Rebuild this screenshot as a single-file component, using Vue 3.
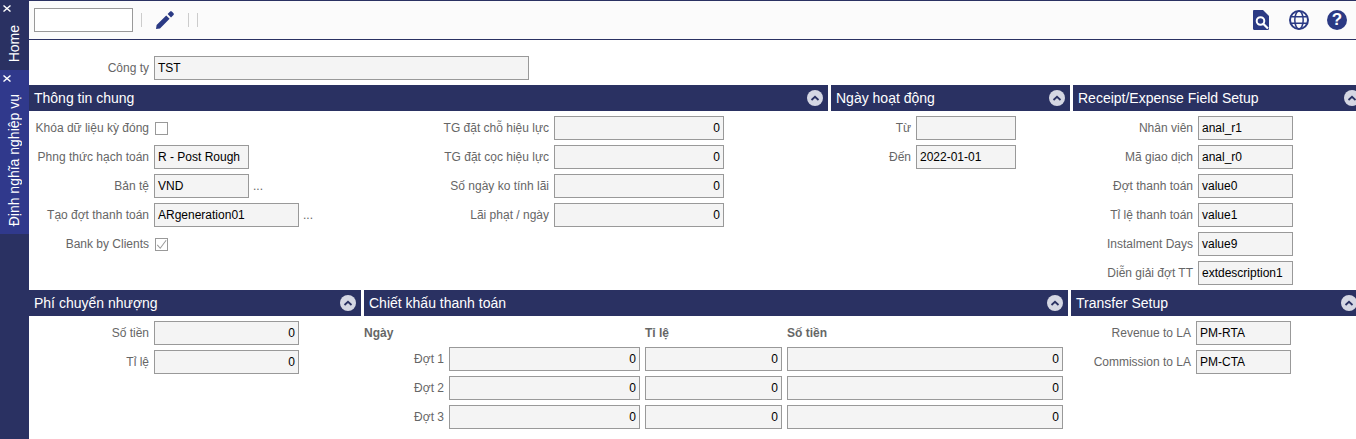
<script setup>
const general = [
  { label: 'Phng thức hạch toán', value: 'R - Post Rough', cls: 'w95' },
  { label: 'Bản tệ', value: 'VND', cls: 'w95', more: true },
  { label: 'Tạo đợt thanh toán', value: 'ARgeneration01', cls: 'w145', more: true },
]
const generalRight = ['TG đặt chỗ hiệu lực', 'TG đặt cọc hiệu lực', 'Số ngày ko tính lãi', 'Lãi phạt / ngày']
const receipt = [
  ['Nhân viên', 'anal_r1'],
  ['Mã giao dịch', 'anal_r0'],
  ['Đợt thanh toán', 'value0'],
  ['Tỉ lệ thanh toán', 'value1'],
  ['Instalment Days', 'value9'],
  ['Diễn giải đợt TT', 'extdescription1'],
]
const batches = ['Đợt 1', 'Đợt 2', 'Đợt 3']
const transfer = [['Revenue to LA', 'PM-RTA'], ['Commission to LA', 'PM-CTA']]
</script>

<template>
  <div class="app">
    <aside class="side">
      <div class="tab home">
        <svg class="x" viewBox="0 0 8 7" width="8" height="7"><path d="M0.5 0.5 L7.5 6.5 M7.5 0.5 L0.5 6.5" /></svg>
        <span class="vtext">Home</span>
      </div>
      <div class="tab active">
        <svg class="x" viewBox="0 0 8 7" width="8" height="7"><path d="M0.5 0.5 L7.5 6.5 M7.5 0.5 L0.5 6.5" /></svg>
        <span class="vtext">Định nghĩa nghiệp vụ</span>
      </div>
    </aside>

    <main class="main">
      <header class="toolbar">
        <div class="search"></div>
        <i class="sep first"></i>
        <svg class="pencil" viewBox="0 0 18 18" width="18" height="18">
          <path fill="#2b3a84" d="M0.6 14 L0 18 L4 17.4 L13.6 7.8 L10.2 4.4 Z M11.6 3 L15 6.4 L17.5 3.9 C18 3.4 18 2.7 17.5 2.2 L15.8 0.5 C15.3 0 14.6 0 14.1 0.5 Z" />
        </svg>
        <i class="sep second"></i>
        <i class="sep third"></i>
        <div class="tools">
          <svg width="16" height="20" viewBox="0 0 16 20">
            <path fill="#2b3a84" d="M1.2 0 H10 L16 6 V18.8 C16 19.5 15.5 20 14.8 20 H1.2 C.5 20 0 19.5 0 18.8 V1.2 C0 .5 .5 0 1.2 0 Z" />
            <circle cx="7.5" cy="11" r="3.8" fill="none" stroke="#fff" stroke-width="2" />
            <path d="M10.2 13.7 L15 18.5" stroke="#fff" stroke-width="2.2" />
          </svg>
          <svg class="globe" width="20" height="20" viewBox="0 0 20 20" fill="none" stroke="#2b3a84">
            <circle cx="10" cy="10" r="9" stroke-width="2" />
            <ellipse cx="10" cy="10" rx="4.2" ry="9" stroke-width="1.5" />
            <path d="M1 6.8 H19 M1 13.2 H19" stroke-width="1.5" />
          </svg>
          <span class="help">?</span>
        </div>
      </header>

      <div class="company">
        <label class="lbl w120">Công ty</label>
        <div class="field w375">TST</div>
      </div>

      <div class="row-top">
        <section class="panel p-general">
          <h2 class="head">Thông tin chung<b class="chev"><svg viewBox="0 0 16 16"><path d="M4.5 10 L8 6.8 L11.5 10" /></svg></b></h2>
          <div class="cols">
            <div class="col-left">
              <div class="line">
                <label class="lbl w120">Khóa dữ liệu kỳ đóng</label>
                <span class="check"></span>
              </div>
              <div v-for="r in general" :key="r.label" class="line">
                <label class="lbl w120">{{ r.label }}</label>
                <div class="field" :class="r.cls">{{ r.value }}</div>
                <span v-if="r.more" class="more">...</span>
              </div>
              <div class="line">
                <label class="lbl w120">Bank by Clients</label>
                <span class="check">
                  <svg viewBox="0 0 13 13" width="11" height="11"><path d="M1.5 7 L5 11 L12 1.5" fill="none" stroke="#999" stroke-width="1.2" /></svg>
                </span>
              </div>
            </div>
            <div class="col-right">
              <div v-for="r in generalRight" :key="r" class="line">
                <label class="lbl w120">{{ r }}</label>
                <div class="field num w170">0</div>
              </div>
            </div>
          </div>
        </section>

        <section class="panel p-dates">
          <h2 class="head">Ngày hoạt động<b class="chev"><svg viewBox="0 0 16 16"><path d="M4.5 10 L8 6.8 L11.5 10" /></svg></b></h2>
          <div class="body">
            <div class="line">
              <label class="lbl w80">Từ</label>
              <div class="field w100"></div>
            </div>
            <div class="line">
              <label class="lbl w80">Đến</label>
              <div class="field w100">2022-01-01</div>
            </div>
          </div>
        </section>

        <section class="panel p-receipt">
          <h2 class="head">Receipt/Expense Field Setup<b class="chev"><svg viewBox="0 0 16 16"><path d="M4.5 10 L8 6.8 L11.5 10" /></svg></b></h2>
          <div class="body">
            <div v-for="r in receipt" :key="r[0]" class="line">
              <label class="lbl w120">{{ r[0] }}</label>
              <div class="field w95">{{ r[1] }}</div>
            </div>
          </div>
        </section>
      </div>

      <div class="row-bottom">
        <section class="panel p-fee">
          <h2 class="head">Phí chuyển nhượng<b class="chev"><svg viewBox="0 0 16 16"><path d="M4.5 10 L8 6.8 L11.5 10" /></svg></b></h2>
          <div class="body">
            <div class="line">
              <label class="lbl w120">Số tiền</label>
              <div class="field num w145">0</div>
            </div>
            <div class="line">
              <label class="lbl w120">Tỉ lệ</label>
              <div class="field num w145">0</div>
            </div>
          </div>
        </section>

        <section class="panel p-discount">
          <h2 class="head">Chiết khấu thanh toán<b class="chev"><svg viewBox="0 0 16 16"><path d="M4.5 10 L8 6.8 L11.5 10" /></svg></b></h2>
          <div class="grid">
            <span class="th th-date">Ngày</span>
            <span class="th">Tỉ lệ</span>
            <span class="th">Số tiền</span>
            <template v-for="b in batches" :key="b">
              <label class="lbl batch">{{ b }}</label>
              <div class="field num">0</div>
              <div class="field num">0</div>
              <div class="field num">0</div>
            </template>
          </div>
        </section>

        <section class="panel p-transfer">
          <h2 class="head">Transfer Setup<b class="chev"><svg viewBox="0 0 16 16"><path d="M4.5 10 L8 6.8 L11.5 10" /></svg></b></h2>
          <div class="body">
            <div v-for="r in transfer" :key="r[0]" class="line">
              <label class="lbl w120">{{ r[0] }}</label>
              <div class="field w95">{{ r[1] }}</div>
            </div>
          </div>
        </section>
      </div>
    </main>
  </div>
</template>

<style scoped>
.app {
  display: flex;
  width: 1356px;
  height: 439px;
  overflow: hidden;
  background: #fff;
  font-family: "Liberation Sans", Arial, sans-serif;
  font-size: 12px;
}
.side {
  width: 29px;
  flex: none;
  background: #2a3162;
  color: #fff;
}
.tab {
  display: flex;
  flex-direction: column;
  overflow: hidden;
}
.home { height: 70px; }
.active { height: 164px; background: #30398c; }
.x {
  flex: none;
  margin: 5px 0 0 3px;
  fill: none;
  stroke: #fff;
  stroke-width: 1.4;
}
.vtext {
  writing-mode: vertical-rl;
  transform: rotate(180deg);
  font-size: 14px;
  line-height: 29px;
  margin-top: auto;
  margin-bottom: 8px;
  white-space: nowrap;
}
.main { flex: 1; min-width: 0; }
.toolbar {
  box-sizing: border-box;
  height: 40px;
  display: flex;
  align-items: center;
  padding-left: 5px;
  background: #fbfbfb;
  border-top: 1px solid #2a3162;
  border-bottom: 1px solid #2a3162;
}
.search {
  width: 99px;
  height: 24px;
  box-sizing: border-box;
  background: #fff;
  border: 1px solid #999;
}
.sep {
  width: 1px;
  height: 14px;
  background: #ccc;
}
.first { margin-left: 8px; }
.pencil { margin-left: 14px; }
.second { margin-left: 14px; }
.third { margin-left: 8px; }
.tools {
  margin-left: auto;
  display: flex;
  align-items: center;
  padding-right: 9px;
}
.globe { margin-left: 20px; }
.help {
  width: 20px;
  height: 20px;
  margin-left: 18px;
  border-radius: 50%;
  background: #2b3a84;
  color: #fff;
  text-align: center;
  font-size: 17px;
  line-height: 20px;
  font-weight: 700;
}
.company {
  display: flex;
  align-items: center;
  height: 24px;
  margin-top: 16px;
}
.row-top, .row-bottom {
  display: flex;
}
.row-top { margin-top: 5px; height: 205px; }
.panel { flex: none; }
.p-general { width: 799px; }
.p-dates { width: 239px; margin-left: 3px; }
.p-receipt { width: 292px; margin-left: 3px; }
.p-fee { width: 332px; }
.p-discount { width: 704px; margin-left: 3px; }
.p-transfer { width: 291px; margin-left: 3px; }
.head {
  position: relative;
  height: 26px;
  margin: 0;
  padding-left: 5px;
  background: #2a3162;
  color: #fff;
  font-size: 14px;
  font-weight: 400;
  line-height: 26px;
}
.chev {
  position: absolute;
  top: 5px;
  right: 5px;
  width: 16px;
  height: 16px;
  border-radius: 50%;
  background: #d5d7e3;
}
.chev svg {
  display: block;
  width: 16px;
  height: 16px;
  fill: none;
  stroke: #2a3162;
  stroke-width: 1.8;
}
.cols { display: flex; padding-top: 5px; }
.col-left { width: 400px; }
.body { padding-top: 5px; }
.line {
  display: flex;
  align-items: center;
  height: 24px;
  margin-bottom: 5px;
}
.lbl {
  flex: none;
  margin-right: 5px;
  color: #666;
  text-align: right;
  white-space: nowrap;
}
.w120 { width: 120px; }
.w80 { width: 80px; }
.field {
  box-sizing: border-box;
  height: 24px;
  padding: 0 3px;
  background: #f4f4f4;
  border: 1px solid #999;
  color: #000;
  line-height: 22px;
  white-space: nowrap;
  overflow: hidden;
}
.num { text-align: right; }
.w95 { width: 95px; }
.w100 { width: 100px; }
.w145 { width: 145px; }
.w170 { width: 170px; }
.w375 { width: 375px; }
.check {
  box-sizing: border-box;
  width: 13px;
  height: 13px;
  margin-left: 1px;
  border: 1px solid #999;
  display: flex;
  align-items: center;
  justify-content: center;
}
.more { margin-left: 4px; color: #666; }
.grid {
  display: grid;
  grid-template-columns: 80px 191px 137px 276px;
  grid-template-rows: 26px;
  grid-auto-rows: 24px;
  column-gap: 5px;
  row-gap: 5px;
}
.th {
  line-height: 34px;
  font-weight: 700;
  color: #666;
}
.th-date { grid-column: 1 / 3; }
.batch { margin-right: 0; line-height: 24px; }
</style>

<style>
body { margin: 0; }
</style>
